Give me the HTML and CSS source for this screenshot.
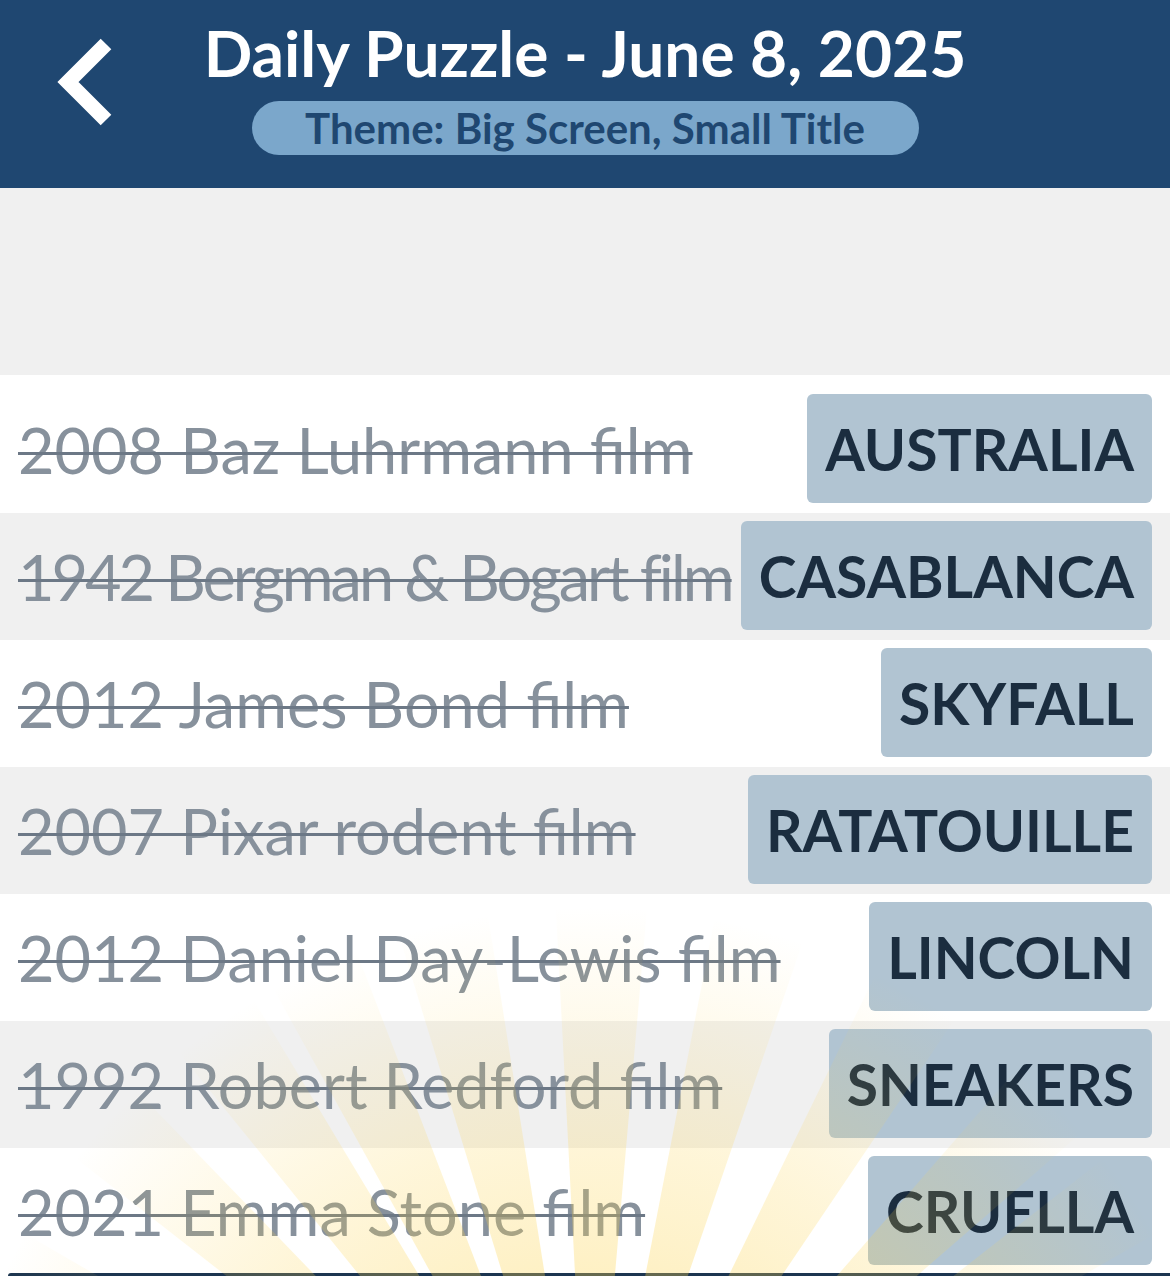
FILE: index.html
```html
<!DOCTYPE html>
<html lang="en">

<head>
    <meta charset="UTF-8">
    <meta name="viewport" content="width=device-width, initial-scale=1.0">
    <title>Daily Puzzle - June 8, 2025</title>
    <link rel="stylesheet" href="styles.css">
</head>

<body>

    <header class="top-bar">
        <a class="back-btn" href="#" aria-label="Back">
            <svg width="64" height="92" viewBox="0 0 64 92">
                <polyline points="54,8 16,46 54,84" fill="none" stroke="#fff" stroke-width="15" />
            </svg>
        </a>
        <div class="title-block">
            <h1>Daily Puzzle - June 8, 2025</h1>
            <div class="theme-pill">Theme: Big Screen, Small Title</div>
        </div>
    </header>

    <div class="spacer"></div>

    <main class="board">
        <div class="clue-list">
            <div class="clue-row">
                <span class="clue">2008 Baz Luhrmann film</span>
                <span class="answer">AUSTRALIA</span>
            </div>
            <div class="clue-row">
                <span class="clue tight">1942 Bergman &amp; Bogart film</span>
                <span class="answer">CASABLANCA</span>
            </div>
            <div class="clue-row">
                <span class="clue">2012 James Bond film</span>
                <span class="answer">SKYFALL</span>
            </div>
            <div class="clue-row">
                <span class="clue">2007 Pixar rodent film</span>
                <span class="answer">RATATOUILLE</span>
            </div>
            <div class="clue-row">
                <span class="clue">2012 Daniel Day-Lewis film</span>
                <span class="answer">LINCOLN</span>
            </div>
            <div class="clue-row">
                <span class="clue">1992 Robert Redford film</span>
                <span class="answer">SNEAKERS</span>
            </div>
            <div class="clue-row">
                <span class="clue">2021 Emma Stone film</span>
                <span class="answer">CRUELLA</span>
            </div>
        </div>
        <div class="bottom-bar"></div>

        <!-- sunburst celebration overlay -->
        <svg class="sunburst" width="1170" height="500" viewBox="0 0 1170 500">
            <defs>
                <radialGradient id="rayFade" gradientUnits="userSpaceOnUse" cx="590" cy="784" r="760">
                    <stop offset="0.3" stop-color="#fcd34d" stop-opacity="0.38" />
                    <stop offset="0.55" stop-color="#fcd34d" stop-opacity="0.22" />
                    <stop offset="0.86" stop-color="#fcd34d" stop-opacity="0" />
                </radialGradient>
            </defs>
            <g id="rays" fill="url(#rayFade)"></g>
        </svg>
    </main>

    <script>
        // Draw the rays of the sunburst
        const rays = document.getElementById('rays');
        const cx = 590, cy = 784, len = 1000;
        const angles = [-64, -48, -35, -25, -13, 1, 15, 30, 45, 56, 70];
        const half = 4;

        angles.forEach(a => {
            const a1 = (a - half) * Math.PI / 180;
            const a2 = (a + half) * Math.PI / 180;
            const x1 = cx + Math.sin(a1) * len, y1 = cy - Math.cos(a1) * len;
            const x2 = cx + Math.sin(a2) * len, y2 = cy - Math.cos(a2) * len;
            const ray = document.createElementNS('http://www.w3.org/2000/svg', 'polygon');
            ray.setAttribute('points', `${cx},${cy} ${x1},${y1} ${x2},${y2}`);
            rays.appendChild(ray);
        });
    </script>

</body>

</html>
```

FILE: styles.css
```css
body {
    margin: 0;
    font-family: 'Lato', 'Noto Sans', sans-serif;
    background-color: #f0f0f0;
    height: 1276px;
    overflow: hidden;
}

.top-bar {
    display: grid;
    grid-template-columns: 1fr auto 1fr;
    height: 188px;
    background-color: #1f4771;
    color: white;
}

.back-btn {
    justify-self: start;
    padding: 36px 0 0 52px;
}

.title-block {
    display: flex;
    flex-direction: column;
    align-items: center;
}

.title-block h1 {
    margin: 16px 0 0;
    font-size: 64px;
    line-height: 74px;
    font-weight: 700;
}

.theme-pill {
    margin-top: 11px;
    width: 667px;
    height: 54px;
    line-height: 54px;
    border-radius: 27px;
    background-color: #7ba7cb;
    color: #1f4771;
    font-size: 42px;
    font-weight: 700;
    text-align: center;
}

.spacer {
    height: 187px;
}

.board {
    position: relative;
    background-color: white;
    padding-top: 11px;
}

.clue-row {
    display: flex;
    align-items: center;
    justify-content: space-between;
    gap: 8px;
    height: 127px;
    padding: 0 18px;
    box-sizing: border-box;
    background-color: white;
}

.clue-row:nth-child(even) {
    background-color: #f0f0f0;
}

.clue {
    font-size: 63px;
    color: #87919c;
    text-decoration: line-through;
    text-decoration-color: #6c7886;
    text-decoration-thickness: 3px;
    white-space: nowrap;
}

.clue.tight {
    letter-spacing: -3px;
}

.answer {
    flex-shrink: 0;
    display: flex;
    align-items: center;
    height: 109px;
    margin-top: -2px;
    padding: 0 18px;
    border-radius: 6px;
    background-color: #b1c4d2;
    color: #1b2d3f;
    font-size: 57px;
    font-weight: 700;
}

.bottom-bar {
    height: 3px;
    margin-left: 8px;
    margin-top: -2px;
    border-top-left-radius: 4px;
    background-color: #1c3550;
}

.sunburst {
    position: absolute;
    left: 0;
    bottom: 0;
    pointer-events: none;
}
```
